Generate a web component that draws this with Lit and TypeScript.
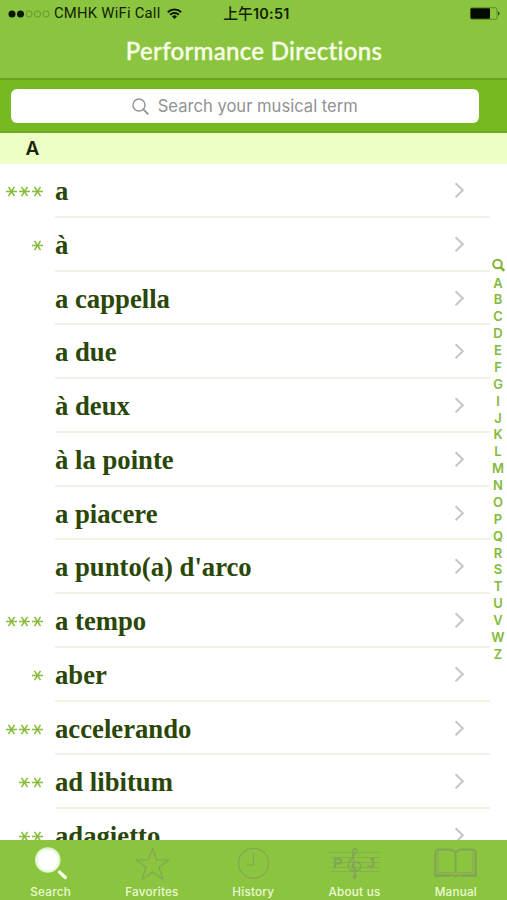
import { LitElement, html, svg, css } from "lit";
import { customElement, property } from "lit/decorators.js";

interface Term {
  name: string;
  stars: number;
}

const TERMS: Term[] = [
  { name: "a", stars: 3 },
  { name: "à", stars: 1 },
  { name: "a cappella", stars: 0 },
  { name: "a due", stars: 0 },
  { name: "à deux", stars: 0 },
  { name: "à la pointe", stars: 0 },
  { name: "a piacere", stars: 0 },
  { name: "a punto(a) d'arco", stars: 0 },
  { name: "a tempo", stars: 3 },
  { name: "aber", stars: 1 },
  { name: "accelerando", stars: 3 },
  { name: "ad libitum", stars: 2 },
  { name: "adagietto", stars: 2 },
];

const LETTERS = [..."ABCDEFGIJKLMNOPQRSTUVWZ"];

@customElement("status-bar")
class StatusBar extends LitElement {
  static styles = css`
    :host {
      display: grid;
      grid-template-columns: 1fr auto 1fr;
      align-items: center;
      height: 27px;
      padding: 0 7px 0 8px;
      font: 14px/27px Inter, "Noto Sans CJK SC", sans-serif;
      color: #132104;
    }
    .left {
      display: flex;
      align-items: center;
    }
    .carrier {
      margin: 0 7px 0 4px;
      font: 14.8px/27px Roboto, sans-serif;
      letter-spacing: 0.24px;
      white-space: nowrap;
    }
    .time {
      display: flex;
      font-weight: 600;
      font-size: 14.4px;
      letter-spacing: 0.3px;
      margin-left: 5px;
    }
    .cjk {
      font: 500 14.8px/25px "Noto Sans CJK SC", sans-serif;
      letter-spacing: 0;
    }
    .battery {
      justify-self: end;
    }
    svg {
      display: block;
    }
  `;
  render() {
    return html`
      <div class="left">
        <svg width="42" height="8" viewBox="0 0 42 8">
          ${[0, 1, 2, 3, 4].map((i) =>
            i < 2
              ? svg`<circle cx=${4 + i * 8.5} cy="4" r="3.5" fill="#0b1502" />`
              : svg`<circle cx=${4 + i * 8.5} cy="4" r="3.1" fill="none" stroke="#5f8a2b" stroke-width=".8" />`
          )}
        </svg>
        <span class="carrier">CMHK WiFi Call</span>
        <svg width="15" height="11" viewBox="0 0 15 11" fill="none" stroke="#0b1502" stroke-width="2">
          <path d="M.8 4.2a9.5 9.5 0 0 1 13.4 0M3.2 6.8a6.1 6.1 0 0 1 8.6 0" />
          <path d="M7.5 11 5 8.5a3.5 3.5 0 0 1 5 0z" fill="#0b1502" stroke="none" />
        </svg>
      </div>
      <div class="time"><span class="cjk">上午</span><span>10:51</span></div>
      <svg class="battery" width="30" height="13" viewBox="0 0 30 13">
        <rect x=".5" y=".7" width="26.5" height="11.6" rx="1.6" fill="none" stroke="#527b22" stroke-width=".8" />
        <rect x=".6" y="1.2" width="19.4" height="10.6" rx="1" fill="#050a00" />
        <path d="M28 4.3q3.2 2.2 0 4.4z" fill="#2c4a0c" />
      </svg>
    `;
  }
}

@customElement("term-row")
class TermRow extends LitElement {
  @property({ type: Object }) term!: Term;
  static styles = css`
    :host {
      display: flex;
      flex: none;
      height: 53.77px;
    }
    .stars {
      display: flex;
      justify-content: flex-end;
      gap: 2px;
      width: 42.5px;
      margin-right: 12.5px;
      padding-top: 22px;
    }
    .body {
      display: flex;
      justify-content: space-between;
      width: 435px;
      box-sizing: border-box;
      border-bottom: 2px solid #f0f2e3;
      padding-right: 25px;
    }
    .name {
      font: bold 26.7px/54px "Liberation Serif", serif;
      color: #2b4708;
      white-space: nowrap;
    }
    .chevron {
      margin-top: 18px;
    }
  `;
  render() {
    return html`
      <div class="stars">
        ${Array.from(
          { length: this.term.stars },
          () => html`<svg width="11" height="11" viewBox="0 0 11 11" fill="none" stroke="#86bd3c" stroke-width="1.6">
            <path d="M0 5.500h11M2.500.900l6 9.200M8.500.900l-6 9.200" />
          </svg>`
        )}
      </div>
      <div class="body">
        <span class="name">${this.term.name}</span>
        <svg class="chevron" width="11" height="17" viewBox="0 0 11 17" fill="none" stroke="#c6c6c8" stroke-width="2">
          <path d="M1.600 1.300 8.800 8.300l-7.200 7" />
        </svg>
      </div>
    `;
  }
}

const icons = {
  search: svg`
    <circle cx="22.8" cy="20" r="12.2" fill="#fff" stroke="#d9efbd" stroke-width="1.2" />
    <circle cx="22.8" cy="20" r="10.6" fill="none" stroke="#d3ebb5" stroke-width=".6" />
    <path d="m34.5 32 5.800 5.500" stroke="#f4ffe4" stroke-width="3.4" stroke-linecap="round" />`,
  star: svg`<path d="m26.5 8.500 4 11.200 12.300.3-9.800 7.200 3.800 12-10.300-7.200-10.300 7.200 3.800-12-9.800-7.200 12.300-.3z" />`,
  clock: svg`<circle cx="25.500" cy="23.300" r="15" /><path d="M25.500 13V25h-6.500" />`,
  clef: svg`
    <path d="M0 12.500h51M2 17.500h49M2 22.500h49M2 27.500h49M2 31.500h49" stroke-width=".7" />
    <path d="M26.500 36.500 23.500 13c0-4 3.500-6.500 4.300-3 .8 4-8.500 8.500-8.500 15.500 0 7.500 12.500 7 12.500 1 0-6-8.500-5.500-8.500-.5 0 3 3 3.500 3.500 2.500" stroke-width="1.600" />
    <circle cx="25.500" cy="37" r="2" fill="#86a35b" stroke="none" />
    <text x="4" y="28" class="note">P</text>
    <text x="38" y="28" class="note">J</text>`,
  book: svg`
    <path d="M25.500 13q-2-3.500-7-3.500H8.500q-3 0-3 3v22.500h14.500q4 0 5.500 1.500 1.500-1.500 5.500-1.500h14.500V12.500q0-3-3-3h-10q-5 0-7 3.500zV33" stroke-width="1.900" />
    <path d="M8 10.500v22h12q4 0 5.500 2 1.500-2 5.500-2h12v-22M4.600 13.500v23h16M46.400 13.500v23h-16" stroke-width=".9" />`,
};

const TABS = [
  { label: "Search", icon: icons.search },
  { label: "Favorites", icon: icons.star },
  { label: "History", icon: icons.clock },
  { label: "About us", icon: icons.clef },
  { label: "Manual", icon: icons.book },
];

@customElement("tab-bar")
class TabBar extends LitElement {
  static styles = css`
    :host {
      display: grid;
      grid-template-columns: repeat(5, 101.3px);
      flex: none;
      height: 60px;
      background: #8bc53f;
    }
    .tab {
      display: flex;
      flex-direction: column;
      align-items: center;
      font: 500 11.7px/14px Inter, sans-serif;
      letter-spacing: 0.24px;
      color: #ecfbd5;
    }
    .icon {
      height: 45px;
      fill: none;
      stroke: #83a655;
      stroke-width: 1.2;
    }
    .note {
      font: bold 14.5px "Liberation Sans", sans-serif;
      fill: #83a655;
      stroke: none;
    }
  `;
  render() {
    return TABS.map(
      (t) => html`<div class="tab">
        <svg class="icon" width="51" height="45" viewBox="0 0 51 45">${t.icon}</svg>
        <span>${t.label}</span>
      </div>`
    );
  }
}

@customElement("app-root")
class AppRoot extends LitElement {
  static styles = css`
    :host {
      display: flex;
      flex-direction: column;
      width: 507px;
      height: 900px;
      overflow: hidden;
      background: #fff;
    }
    .header {
      flex: none;
      height: 78px;
      background: #8bc53f;
    }
    .title {
      margin: 0;
      padding-left: 1px;
      text-align: center;
      font: 500 24px/48px Lato, sans-serif;
      letter-spacing: 0.3px;
      color: #f8ffe9;
      -webkit-text-stroke: 0.35px #f8ffe9;
    }
    .search {
      flex: none;
      box-sizing: border-box;
      height: 55px;
      padding: 9px 28px 0 10.5px;
      border-top: 2px solid #68a41e;
      border-bottom: 2px solid #6fa921;
      background: #77b922;
    }
    .field {
      display: flex;
      align-items: center;
      justify-content: center;
      gap: 9px;
      height: 34px;
      border-radius: 6px;
      background: #fff;
      font: 16.6px/34px Inter, sans-serif;
      color: #929294;
    }
    .field span {
      margin-top: -1px;
    }
    .section {
      flex: none;
      height: 31px;
      padding-left: 25.500px;
      background: #edffc5;
      font: 600 19px/31px Inter, sans-serif;
      color: #1c2411;
    }
    .content {
      display: flex;
      flex: 1;
      min-height: 0;
      overflow: hidden;
    }
    .list {
      display: flex;
      flex-direction: column;
      width: 490px;
    }
    .index {
      display: flex;
      flex-direction: column;
      align-items: center;
      width: 16px;
      padding-top: 93.5px;
      font: 600 13px/16.87px Inter, sans-serif;
      color: #83ba3a;
    }
    .index svg {
      flex: none;
      margin-bottom: 3px;
    }
  `;
  render() {
    return html`
      <div class="header">
        <status-bar></status-bar>
        <h1 class="title">Performance Directions</h1>
      </div>
      <div class="search">
        <div class="field">
          <svg width="17" height="17" viewBox="0 0 17 17" fill="none" stroke="#929294" stroke-width="1.4">
            <circle cx="7" cy="7" r="6" />
            <path d="m11.300 11.300 5 5" stroke-width="1.900" />
          </svg>
          <span>Search your musical term</span>
        </div>
      </div>
      <div class="section">A</div>
      <div class="content">
        <div class="list">${TERMS.map((t) => html`<term-row .term=${t}></term-row>`)}</div>
        <div class="index">
          <svg width="13" height="14" viewBox="0 0 13 14" fill="none" stroke="#7db52f" stroke-width="2">
            <circle cx="5.500" cy="6" r="4.300" />
            <path d="m8.600 9.200 3.600 3.600" stroke-width="2.500" />
          </svg>
          ${LETTERS.map((l) => html`<span>${l}</span>`)}
        </div>
      </div>
      <tab-bar></tab-bar>
    `;
  }
}
